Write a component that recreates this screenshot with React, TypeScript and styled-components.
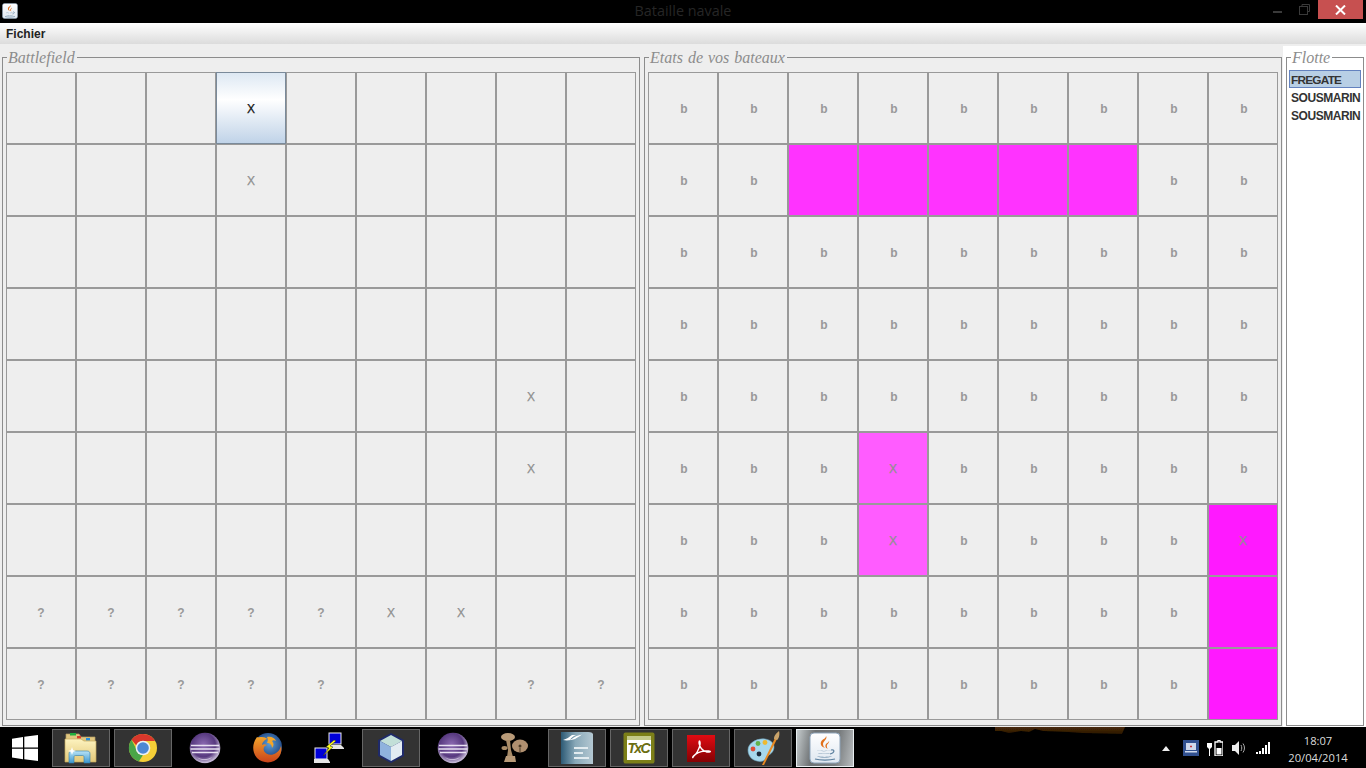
import React from "react";
import styled, { createGlobalStyle } from "styled-components";

const Global = createGlobalStyle`
  html, body { margin: 0; padding: 0; background: #000; overflow: hidden; }
  * { box-sizing: border-box; }
`;

const Screen = styled.div`
  width: 1366px;
  height: 768px;
  display: flex;
  flex-direction: column;
  background: #000;
  font-family: "Liberation Sans", Arial, sans-serif;
  overflow: hidden;
`;

const TitleBar = styled.header`
  position: relative;
  flex: 0 0 23px;
  display: flex;
  justify-content: center;
  background: #000;
`;

const AppIcon = styled.span`
  position: absolute;
  left: 2px;
  top: 3px;
  width: 16px;
  height: 16px;
  display: block;
`;

const Title = styled.h1`
  margin: 0;
  font: 400 14.4px/22px "Open Sans", sans-serif;
  color: #262626;
`;

const WindowControls = styled.div`
  position: absolute;
  top: 0;
  right: 3px;
  display: flex;
  align-items: flex-start;
`;

const Control = styled.span`
  width: 27px;
  height: 19px;
  display: flex;
  align-items: center;
  justify-content: center;
`;

const CloseControl = styled.span`
  width: 45px;
  height: 19px;
  background: #c75050;
  display: flex;
  align-items: center;
  justify-content: center;
`;

const MenuBar = styled.nav`
  flex: 0 0 23px;
  height: 23px;
  background: linear-gradient(#ffffff, #f4f4f4 30%, #dcdcdc);
  border-bottom: 2px solid;
  border-image: linear-gradient(#cfcfcf 50%, #eeeeee 50%) 1;
  padding-left: 6px;
  font-size: 12px;
  font-weight: 700;
  line-height: 22px;
  color: #222;
`;

const Workspace = styled.main`
  flex: 0 0 681px;
  display: flex;
  background: #eee;
  padding-left: 2px;
`;

const Panel = styled.fieldset`
  flex: 0 0 638px;
  margin: 2px 0 1px;
  padding: 6px 3px 5px 3px;
  border: 1px solid #8c8c8c;
  min-width: 0;
  & + & {
    margin-left: 4px;
  }
`;

const Legend = styled.legend`
  margin-left: 1px;
  padding: 0 2px 0 1px;
  height: 18px;
  font: italic 400 16px/20px "Liberation Serif", "Times New Roman", serif;
  word-spacing: 1px;
  color: #8c8c8c;
`;

const FleetLegend = styled(Legend)`
  margin-left: 2px;
`;

const Board = styled.div`
  display: grid;
  grid-template-columns: repeat(9, 70px);
  grid-template-rows: repeat(9, 72px);
`;

type Tone = "plain" | "pink" | "faded" | "hot" | "active";

const toneBackground: Record<Tone, string> = {
  plain: "#eeeeee",
  pink: "#ff33ff",
  faded: "#ff5cff",
  hot: "#ff19ff",
  active: "linear-gradient(#dde8f3, #ffffff 38%, #c0d3e8)",
};

const Cell = styled.div<{ $tone: Tone; $glyph: string }>`
  border: 1px solid ${(p) => (p.$tone === "active" ? "#7a8a9a" : "#999999")};
  background: ${(p) => toneBackground[p.$tone]};
  display: flex;
  align-items: center;
  justify-content: center;
  padding: 2px 0 0 ${(p) => (p.$glyph === "b" ? "2px" : "0")};
  font-size: 12px;
  font-weight: ${(p) => (p.$glyph === "X" ? 400 : 700)};
  -webkit-text-stroke: ${(p) => (p.$glyph === "X" ? "0.25px" : "0")};
  color: ${(p) =>
    p.$tone === "active" ? "#111111" : p.$glyph === "X" ? "#8f8f8f" : "#999999"};
`;

const FleetColumn = styled.aside`
  flex: 0 0 83px;
  width: 83px;
  margin-left: 1px;
  background: #fff;
  padding: 2px 2px 0 3px;
  display: flex;
`;

const FleetPanel = styled.fieldset`
  flex: 0 0 78px;
  width: 78px;
  margin: 0 0 1px;
  padding: 4px 2px 0 2px;
  border: 1px solid #8c8c8c;
  min-width: 0;
`;

const FleetRow = styled.div<{ $selected?: boolean }>`
  width: 72px;
  height: 18px;
  font-size: ${(p) => (p.$selected ? "11.8px" : "12px")};
  font-weight: 700;
  line-height: 18px;
  color: #333;
  white-space: nowrap;
  padding-left: ${(p) => (p.$selected ? "1px" : "2px")};
  letter-spacing: ${(p) => (p.$selected ? "-0.75px" : "-0.45px")};
  background: ${(p) => (p.$selected ? "#b8cfe5" : "transparent")};
  border: 1px solid ${(p) => (p.$selected ? "#6382bf" : "transparent")};
  border-left-width: ${(p) => (p.$selected ? "1px" : "0")};
`;

const Taskbar = styled.footer`
  position: relative;
  flex: 0 0 41px;
  display: flex;
  align-items: flex-start;
  background: #000;
  padding-top: 2px;
`;

const Wallpaper = styled.svg`
  position: absolute;
  left: 990px;
  top: 0;
`;

const StartButton = styled.span`
  flex: 0 0 52px;
  height: 38px;
  display: flex;
  align-items: center;
  justify-content: center;
  padding: 0 14px 0 12px;
`;

const TaskList = styled.div`
  display: flex;
  gap: 4px;
`;

const TaskButton = styled.span<{ $state: "idle" | "open" | "active" }>`
  width: 58px;
  height: 38px;
  display: flex;
  align-items: center;
  justify-content: center;
  border: 1px solid
    ${(p) =>
      p.$state === "idle" ? "transparent" : p.$state === "open" ? "#666" : "#e8eef0"};
  background: ${(p) =>
    p.$state === "idle"
      ? "transparent"
      : p.$state === "open"
        ? "#333"
        : "linear-gradient(100deg, #c4cacc, #6e7274 30%, #7a7e80 70%, #b8bcbe)"};
`;

const Tray = styled.div`
  margin-left: auto;
  height: 38px;
  display: flex;
  align-items: center;
  gap: 8px;
`;

const TrayArrow = styled.span`
  width: 12px;
  display: flex;
  justify-content: center;
  margin-right: 3px;
`;

const Clock = styled.time`
  width: 87px;
  padding: 2px 9px 0 0;
  display: flex;
  flex-direction: column;
  align-items: center;
  font: 400 11.2px/17px "Open Sans", sans-serif;
  color: #dcdcdc;
`;

const range = (n: number) => Array.from({ length: n }, (_, i) => i);

type CellSpec = { text: string; tone: Tone };

const leftBoard = (r: number, c: number): CellSpec => {
  if (r === 0 && c === 3) return { text: "X", tone: "active" };
  if (r === 1 && c === 3) return { text: "X", tone: "plain" };
  if ((r === 4 || r === 5) && c === 7) return { text: "X", tone: "plain" };
  if (r === 7 && c < 5) return { text: "?", tone: "plain" };
  if (r === 7 && (c === 5 || c === 6)) return { text: "X", tone: "plain" };
  if (r === 8 && (c < 5 || c > 6)) return { text: "?", tone: "plain" };
  return { text: "", tone: "plain" };
};

const rightBoard = (r: number, c: number): CellSpec => {
  if (r === 1 && c >= 2 && c <= 6) return { text: "", tone: "pink" };
  if ((r === 5 || r === 6) && c === 3) return { text: "X", tone: "faded" };
  if (r === 6 && c === 8) return { text: "X", tone: "hot" };
  if (r > 6 && c === 8) return { text: "", tone: "hot" };
  return { text: "b", tone: "plain" };
};

const GameBoard = ({ spec }: { spec: (r: number, c: number) => CellSpec }) => (
  <Board>
    {range(9).map((r) =>
      range(9).map((c) => {
        const s = spec(r, c);
        return (
          <Cell key={`${r}-${c}`} $tone={s.tone} $glyph={s.text}>
            {s.text}
          </Cell>
        );
      })
    )}
  </Board>
);

const JavaGlyph = ({ size }: { size: number }) => (
  <svg width={size} height={size} viewBox="0 0 32 32">
    <defs>
      <linearGradient id="jv" x1="0" y1="0" x2="0" y2="1">
        <stop offset="0" stopColor="#ffffff" />
        <stop offset="1" stopColor="#dfe7f0" />
      </linearGradient>
    </defs>
    <rect x="1" y="1" width="30" height="30" rx="4" fill="url(#jv)" stroke="#8fa5bb" />
    <path d="M17 4c2 3-3 5-3 8 0 2 1 3 2 4-3-1-5-3-4-6 1-3 5-3 5-6z" fill="#e2711d" />
    <path d="M20 9c1 2-3 3-2 6 0 1 .5 1.5 1 2-2-1-3-2-2.500-4 .5-2 3-2 3.500-4z" fill="#e2711d" />
    <path d="M8 18c4 1.200 10 1.200 14 0-1 1.500-13 1.600-14 0zM9 21c3 1 9 1 12 0-1 1.200-11 1.300-12 0zM8 24c4 1.200 11 1.200 15 0-2 2-13 2-15 0z" fill="#5b7f9e" />
    <path d="M22 18c4-1 4 3-1 4" fill="none" stroke="#5b7f9e" strokeWidth="1.200" />
    <path d="M6 27c5 1.500 15 1.500 20 0" fill="none" stroke="#5b7f9e" strokeWidth="1.200" />
  </svg>
);

const WindowsLogo = () => (
  <svg width="26" height="26" viewBox="0 0 26 26">
    <path d="M0 3.700 11 2v10.500H0zM12.300 1.800 26 0v12.500H12.300zM0 13.800h11v10.500L0 22.600zM12.300 13.800H26V26l-13.700-1.800z" fill="#fff" />
  </svg>
);

const FolderIcon = () => (
  <svg width="34" height="34" viewBox="0 0 34 34">
    <defs>
      <linearGradient id="fo" x1="0" y1="0" x2="0" y2="1">
        <stop offset="0" stopColor="#fdf3c0" />
        <stop offset="1" stopColor="#e3c878" />
      </linearGradient>
      <linearGradient id="fb" x1="0" y1="0" x2="0" y2="1">
        <stop offset="0" stopColor="#b9e3f6" />
        <stop offset="1" stopColor="#3d97cf" />
      </linearGradient>
    </defs>
    <path d="M2 3h13l2 3h14v24H2z" fill="#e0c680" stroke="#b19c62" strokeWidth=".7" />
    <rect x="6" y="2" width="6" height="2.500" fill="#1fae3d" />
    <rect x="13" y="5" width="4" height="2.500" fill="#d83c2c" />
    <rect x="22" y="7" width="4" height="2.500" fill="#2a8fd8" />
    <path d="M1 8h16l3 2h12v21H1z" fill="url(#fo)" stroke="#c2a85c" strokeWidth=".7" />
    <path d="M5 32V23c0-2 1-3 3-3h15c2 0 3 1 3 3v9h-6v-6c0-1-.500-1.500-1.500-1.500h-7c-1 0-1.500.500-1.500 1.500v6z" fill="url(#fb)" stroke="#2f7cac" strokeWidth=".6" />
    <path d="M8 16l1 3 3 1-3 1-1 3-1-3-3-1 3-1z" fill="#fff" />
  </svg>
);

const ChromeIcon = () => (
  <svg width="30" height="30" viewBox="0 0 30 30">
    <circle cx="15" cy="15" r="14" fill="#f5cf37" />
    <path d="M15 1a14 14 0 0 1 12.100 7H15a7 7 0 0 0-6.600 4.600L3.500 6.800A14 14 0 0 1 15 1z" fill="#d8372c" />
    <path d="M3.500 6.800 9.500 18.500a7 7 0 0 0 5.500 3.500L10.800 28.400A14 14 0 0 1 3.500 6.800z" fill="#4aa548" />
    <circle cx="15" cy="15" r="7.300" fill="#eef1f4" />
    <circle cx="15" cy="15" r="5.800" fill="#4d88d3" />
  </svg>
);

const EclipseIcon = ({ id }: { id: string }) => (
  <svg width="32" height="32" viewBox="0 0 32 32">
    <defs>
      <radialGradient id={id} cx=".45" cy=".4" r=".65">
        <stop offset="0" stopColor="#8d6cb3" />
        <stop offset=".6" stopColor="#57397f" />
        <stop offset=".9" stopColor="#c8bcd8" />
        <stop offset="1" stopColor="#2a1a45" />
      </radialGradient>
    </defs>
    <circle cx="16" cy="16" r="15.300" fill={`url(#${id})`} />
    <path d="M2 13.500h28M1.500 17h29M3 20.500h26" stroke="#e9e2f2" strokeWidth="1.300" />
    <path d="M8 25c4 3 10 3 15 0-2 3.500-12 4.500-15 0z" fill="#d8cfe6" />
  </svg>
);

const FirefoxIcon = () => (
  <svg width="32" height="32" viewBox="0 0 32 32">
    <defs>
      <radialGradient id="ffb" cx=".55" cy=".4" r=".55">
        <stop offset="0" stopColor="#5d9ed6" />
        <stop offset="1" stopColor="#173c7a" />
      </radialGradient>
      <linearGradient id="ffo" x1="0" y1="0" x2="0" y2="1">
        <stop offset="0" stopColor="#f2a32b" />
        <stop offset="1" stopColor="#c9421a" />
      </linearGradient>
    </defs>
    <circle cx="17" cy="15" r="14" fill="url(#ffb)" />
    <path d="M6 5C2 10 0 19 6 26c6 6 17 6 22-1 2-3 3-7 2-11-1 3-2 5-5 7-4 3-10 2-12-2-1-3 0-5 3-6-2-1-4-1-5 0 0-2 2-5 5-6 0-1-3-2-6-2-2 0-3 1-4 0z" fill="url(#ffo)" />
    <path d="M16 5c4-1 8 1 9 4-2-1-3-1-4 0 2 2 2 5 0 7 0-3-2-5-5-5 1-2 1-4 0-6z" fill="#f6a628" />
  </svg>
);

const PuttyIcon = () => (
  <svg width="32" height="32" viewBox="0 0 32 32">
    <rect x="16" y="1" width="12" height="11" fill="#0000d8" stroke="#eee" strokeWidth="1" />
    <path d="M15 13h13l3 3v1H16z" fill="#e6e6e6" />
    <rect x="2" y="16" width="12" height="11" fill="#0000d8" stroke="#eee" strokeWidth="1" />
    <path d="M1 27h14l2 3v1H1z" fill="#e6e6e6" />
    <path d="M21 8l-8 7 3 1-6 8 10-9-3-1 6-5z" fill="#ffff1a" stroke="#222" strokeWidth=".5" />
  </svg>
);

const CubeIcon = () => (
  <svg width="32" height="32" viewBox="0 0 32 32">
    <path d="M16 1 29 8v16l-13 7L3 24V8z" fill="#1f2a6a" />
    <path d="M16 3 27 9 16 15 5 9z" fill="#c2dfd8" />
    <path d="M5 9l11 6v14L5 23z" fill="#8fb2dd" />
    <path d="M27 9 16 15v14l11-6z" fill="#e3ecf2" />
  </svg>
);

const RoosterIcon = () => (
  <svg width="28" height="30" viewBox="0 0 28 30">
    <ellipse cx="7" cy="4" rx="7" ry="4" fill="#b89a78" />
    <path d="M5 7h4l1 10 2 7h-6l1-7z" fill="#a98c68" />
    <ellipse cx="19" cy="13" rx="8" ry="6.500" fill="#b09070" />
    <ellipse cx="3.500" cy="15" rx="3" ry="2" fill="#a98c68" />
    <path d="M5 23h9l1 6H3z" fill="#b89a78" />
    <circle cx="19" cy="13" r="1.500" fill="#4a3a26" />
    <path d="M19 15v4" stroke="#4a3a26" />
  </svg>
);

const WriterIcon = () => (
  <svg width="32" height="36" viewBox="0 0 32 36">
    <defs>
      <linearGradient id="wr" x1="0" y1="0" x2="1" y2="0">
        <stop offset="0" stopColor="#2d5a75" />
        <stop offset=".45" stopColor="#88a8b8" />
        <stop offset="1" stopColor="#b4c8d2" />
      </linearGradient>
    </defs>
    <path d="M0 2h25c3 0 6 0 7 2v30H0z" fill="url(#wr)" />
    <path d="M2 10c4-1 6-3 9-5 2 0 4 0 4 0-3 1-5 3-6 5 2-1 5-4 10-5 2 0 3-2 5-3-3 3-7 5-10 7-3 1-8 2-12 1z" fill="#fff" />
    <path d="M13 18h14M13 23h9M13 28h15" stroke="#e2ebef" strokeWidth="2" />
  </svg>
);

const TxcIcon = () => (
  <svg width="32" height="32" viewBox="0 0 32 32">
    <rect x=".5" y=".5" width="31" height="31" rx="2" fill="#7c7f18" />
    <rect x="4" y="4" width="24" height="24" fill="#fff" />
    <rect x="4" y="4" width="24" height="4" fill="#c4c98a" />
    <text x="4.500" y="21" fontFamily="Liberation Sans" fontSize="14" fontWeight="700" fontStyle="italic" fill="#6b6e12" textLength="23">TxC</text>
  </svg>
);

const AcrobatIcon = () => (
  <svg width="28" height="27" viewBox="0 0 28 27">
    <defs>
      <linearGradient id="ac" x1="0" y1="0" x2="0" y2="1">
        <stop offset="0" stopColor="#e00b12" />
        <stop offset="1" stopColor="#840204" />
      </linearGradient>
    </defs>
    <rect width="28" height="27" fill="url(#ac)" />
    <path d="M6 22c3-2 6-8 7-12 .3-2 0-4-.5-4s-.8 2 0 4c1 3 4 6 7 7 2 .3 4 0 4-.5s-3-1-6-.5c-4 .5-8 2-11 5-1 1-1 2-.5 1.500z" fill="none" stroke="#fff" strokeWidth="1.300" />
  </svg>
);

const PaletteIcon = () => (
  <svg width="34" height="36" viewBox="0 0 34 36">
    <path d="M2 20C2 13 11 8 19 9c7 1 11 6 8 12-2 4-6 4-7 7-1 3-5 4-9 3C6 30 2 26 2 20z" fill="#a7d8ec" stroke="#6fa6c0" strokeWidth=".6" />
    <circle cx="7" cy="19" r="2.400" fill="#df4b36" />
    <circle cx="12" cy="13.500" r="2.400" fill="#63b34a" />
    <circle cx="19" cy="12.500" r="2.400" fill="#efb92e" />
    <circle cx="13" cy="24" r="2.400" fill="#1c2a3a" />
    <path d="M16 35 29 8l2 1-13 26z" fill="#e98a22" />
    <path d="M28 9c0-4 3-6 5-8 1 3 0 8-2 9z" fill="#c9a36a" />
  </svg>
);

const TrayLaptop = () => (
  <svg width="16" height="16" viewBox="0 0 16 16">
    <rect width="16" height="16" fill="#31508f" />
    <rect x="3" y="3" width="10" height="7" fill="#cfd9ec" />
    <path d="M7 6.500h2M8 5.500v2" stroke="#c8353a" />
    <rect x="2" y="11" width="12" height="1.500" fill="#cfd9ec" />
  </svg>
);

const TrayPower = () => (
  <svg width="16" height="16" viewBox="0 0 16 16">
    <path d="M1 0v3M4 0v3M0 3h5v4L3 9v7H2V9L0 7z" fill="#fff" />
    <path d="M9 2h2V.500h2V2h3v14H8V2z" fill="none" stroke="#fff" strokeWidth="1.300" />
    <rect x="9.500" y="8" width="5" height="6.500" fill="#fff" />
  </svg>
);

const TrayVolume = () => (
  <svg width="16" height="16" viewBox="0 0 16 16">
    <path d="M1 5h3l4-4v14l-4-4H1z" fill="#eee" />
    <path d="M10 5c1 2 1 4 0 6M12 3.500c2 3 2 6 0 9" fill="none" stroke="#aaa" />
  </svg>
);

const TraySignal = () => (
  <svg width="16" height="16" viewBox="0 0 16 16">
    <path d="M1 12h2v2H1zM4 11h2v3H4zM7 8h2v6H7zM10 5h2v9h-2zM13 2h2v12h-2z" fill="#fff" />
  </svg>
);

const tasks: { state: "idle" | "open" | "active"; icon: React.ReactNode }[] = [
  { state: "open", icon: <FolderIcon /> },
  { state: "open", icon: <ChromeIcon /> },
  { state: "idle", icon: <EclipseIcon id="ec1" /> },
  { state: "idle", icon: <FirefoxIcon /> },
  { state: "idle", icon: <PuttyIcon /> },
  { state: "open", icon: <CubeIcon /> },
  { state: "idle", icon: <EclipseIcon id="ec2" /> },
  { state: "idle", icon: <RoosterIcon /> },
  { state: "open", icon: <WriterIcon /> },
  { state: "open", icon: <TxcIcon /> },
  { state: "open", icon: <AcrobatIcon /> },
  { state: "open", icon: <PaletteIcon /> },
  { state: "active", icon: <JavaGlyph size={32} /> },
];

export default function App() {
  return (
    <Screen>
      <Global />
      <TitleBar>
        <AppIcon>
          <JavaGlyph size={16} />
        </AppIcon>
        <Title>Bataille navale</Title>
        <WindowControls>
          <Control>
            <svg width="9" height="9" viewBox="0 0 9 9">
              <rect y="6" width="9" height="2" fill="#3a3a3a" />
            </svg>
          </Control>
          <Control>
            <svg width="11" height="11" viewBox="0 0 11 11" fill="none" stroke="#3a3a3a">
              <path d="M3 2.500V.500h7.500V7.500H8.500" />
              <rect x=".5" y="2.500" width="8" height="8" />
            </svg>
          </Control>
          <CloseControl>
            <svg width="11" height="10" viewBox="0 0 11 10" stroke="#fff" strokeWidth="2">
              <path d="M1 .5l9 9M10 .5l-9 9" />
            </svg>
          </CloseControl>
        </WindowControls>
      </TitleBar>
      <MenuBar>Fichier</MenuBar>
      <Workspace>
        <Panel>
          <Legend>Battlefield</Legend>
          <GameBoard spec={leftBoard} />
        </Panel>
        <Panel>
          <Legend>Etats de vos bateaux</Legend>
          <GameBoard spec={rightBoard} />
        </Panel>
        <FleetColumn>
          <FleetPanel>
            <FleetLegend>Flotte</FleetLegend>
            <FleetRow $selected>FREGATE</FleetRow>
            <FleetRow>SOUSMARIN</FleetRow>
            <FleetRow>SOUSMARIN</FleetRow>
          </FleetPanel>
        </FleetColumn>
      </Workspace>
      <Taskbar>
        <Wallpaper width="140" height="10" viewBox="0 0 140 10">
          <defs>
            <filter id="wb">
              <feGaussianBlur stdDeviation="0.6" />
            </filter>
            <linearGradient id="wg" x1="0" y1="0" x2="0" y2="1">
              <stop offset="0" stopColor="#4a2a08" />
              <stop offset="1" stopColor="#2a1604" />
            </linearGradient>
          </defs>
          <path d="M5 0h130l-3 7-40-1-14-1-25-1-8-2-6 3-8-1-12 2-8-2-6 0z" fill="url(#wg)" filter="url(#wb)" />
        </Wallpaper>
        <StartButton>
          <WindowsLogo />
        </StartButton>
        <TaskList>
          {tasks.map((t, i) => (
            <TaskButton key={i} $state={t.state}>
              {t.icon}
            </TaskButton>
          ))}
        </TaskList>
        <Tray>
          <TrayArrow>
            <svg width="8" height="5" viewBox="0 0 8 5">
              <path d="M4 0l4 5H0z" fill="#eee" />
            </svg>
          </TrayArrow>
          <TrayLaptop />
          <TrayPower />
          <TrayVolume />
          <TraySignal />
          <Clock>
            <span>18:07</span>
            <span>20/04/2014</span>
          </Clock>
        </Tray>
      </Taskbar>
    </Screen>
  );
}
